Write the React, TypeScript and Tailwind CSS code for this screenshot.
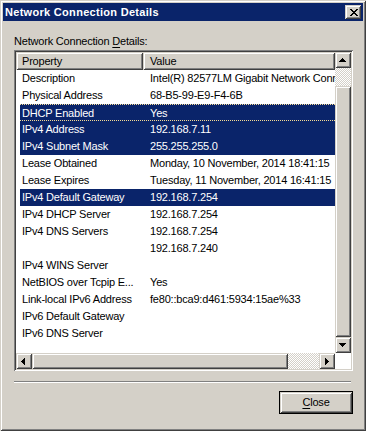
import React from "react";

const raised =
  "shadow-[inset_1px_1px_#d4d0c8,inset_-1px_-1px_#404040,inset_2px_2px_#ffffff,inset_-2px_-2px_#808080]";
const sunken =
  "shadow-[inset_1px_1px_#808080,inset_-1px_-1px_#ffffff,inset_2px_2px_#404040,inset_-2px_-2px_#d4d0c8]";
const checker =
  "bg-[repeating-conic-gradient(#ffffff_0%_25%,#d4d0c8_0%_50%)] bg-[length:2px_2px]";

type Row = { p: string; v: string; sel?: boolean; focus?: boolean };

const rows: Row[] = [
  { p: "Description", v: "Intel(R) 82577LM Gigabit Network Connection" },
  { p: "Physical Address", v: "68-B5-99-E9-F4-6B" },
  { p: "DHCP Enabled", v: "Yes", sel: true, focus: true },
  { p: "IPv4 Address", v: "192.168.7.11", sel: true },
  { p: "IPv4 Subnet Mask", v: "255.255.255.0", sel: true },
  { p: "Lease Obtained", v: "Monday, 10 November, 2014 18:41:15" },
  { p: "Lease Expires", v: "Tuesday, 11 November, 2014 16:41:15" },
  { p: "IPv4 Default Gateway", v: "192.168.7.254", sel: true },
  { p: "IPv4 DHCP Server", v: "192.168.7.254" },
  { p: "IPv4 DNS Servers", v: "192.168.7.254" },
  { p: "", v: "192.168.7.240" },
  { p: "IPv4 WINS Server", v: "" },
  { p: "NetBIOS over Tcpip E...", v: "Yes" },
  { p: "Link-local IPv6 Address", v: "fe80::bca9:d461:5934:15ae%33" },
  { p: "IPv6 Default Gateway", v: "" },
  { p: "IPv6 DNS Server", v: "" },
];

function Arrow({ dir }: { dir: "up" | "down" | "left" | "right" }) {
  const rects: React.ReactNode[] = [];
  for (let i = 0; i < 4; i++) {
    const len = 7 - i * 2;
    if (dir === "up") rects.push(<rect key={i} x={4 + i} y={9 - i} width={len} height={1} />);
    if (dir === "down") rects.push(<rect key={i} x={4 + i} y={6 + i} width={len} height={1} />);
    if (dir === "left") rects.push(<rect key={i} x={5 + 3 - i} y={5 + i - 0} width={1} height={0} />);
  }
  if (dir === "left") {
    rects.length = 0;
    for (let i = 0; i < 4; i++) {
      rects.push(<rect key={i} x={5 + i} y={8 - i} width={1} height={1 + i * 2} />);
    }
  }
  if (dir === "right") {
    rects.length = 0;
    for (let i = 0; i < 4; i++) {
      rects.push(<rect key={i} x={9 - i} y={8 - i} width={1} height={1 + i * 2} />);
    }
  }
  return (
    <svg width="16" height="16" viewBox="0 0 16 16" shapeRendering="crispEdges" className="block">
      <g fill="#000">{rects}</g>
    </svg>
  );
}

function ScrollBtn({ dir }: { dir: "up" | "down" | "left" | "right" }) {
  return (
    <div className={`w-[16px] h-[16px] shrink-0 bg-[#d4d0c8] ${raised}`}>
      <Arrow dir={dir} />
    </div>
  );
}

function CloseGlyph() {
  const pts = [
    [0, 0], [1, 0], [6, 0], [7, 0],
    [1, 1], [2, 1], [5, 1], [6, 1],
    [2, 2], [3, 2], [4, 2], [5, 2],
    [3, 3], [4, 3],
    [2, 4], [3, 4], [4, 4], [5, 4],
    [1, 5], [2, 5], [5, 5], [6, 5],
    [0, 6], [1, 6], [6, 6], [7, 6],
  ];
  return (
    <svg width="8" height="7" viewBox="0 0 8 7" shapeRendering="crispEdges" className="block">
      <g fill="#000">
        {pts.map(([x, y], i) => (
          <rect key={i} x={x} y={y} width={1} height={1} />
        ))}
      </g>
    </svg>
  );
}

export default function App() {
  return (
    <div
      className={`w-[366px] h-[431px] bg-[#d4d0c8] p-[3px] flex flex-col text-[11px] text-black ${raised}`}
      style={{ fontFamily: '"Liberation Sans", Arial, sans-serif' }}
    >
      {/* Title bar */}
      <div className="h-[18px] bg-[#0a246a] flex items-center justify-between pl-[2px] pr-[2px] shrink-0">
        <span className="text-white font-bold text-[11px] leading-[18px] tracking-[0.3px]">
          Network Connection Details
        </span>
        <div className={`w-[16px] h-[14px] bg-[#d4d0c8] flex items-center justify-center ${raised}`}>
          <div className="pl-[1px] pt-[1px]">
            <CloseGlyph />
          </div>
        </div>
      </div>

      {/* Body */}
      <div className="flex flex-col pl-[11px] pr-[10px]">
        <div className="mt-[14px] leading-[13px] tracking-[-0.2px] h-[13px]">
          Network Connection <span className="underline underline-offset-[2px]">D</span>etails:
        </div>

        {/* List view */}
        <div className={`mt-[2px] w-[339px] h-[321px] bg-white p-[2px] ${sunken}`}>
          <div className="grid grid-cols-[319px_16px] grid-rows-[301px_16px]">
            {/* content */}
            <div className="overflow-hidden flex flex-col">
              <div className="flex h-[18px] shrink-0">
                <div className={`w-[127px] h-[18px] bg-[#d4d0c8] pl-[6px] leading-[18px] tracking-[-0.2px] ${raised}`}>
                  Property
                </div>
                <div className={`flex-1 h-[18px] bg-[#d4d0c8] pl-[7px] leading-[18px] tracking-[-0.2px] ${raised}`}>
                  Value
                </div>
              </div>
              {rows.map((r, i) => (
                <div key={i} className="flex h-[17px] shrink-0 pl-[4px]">
                  <div
                    className={`flex w-full h-[17px] whitespace-nowrap tracking-[-0.2px] leading-[17px] ${
                      r.sel ? "bg-[#0a246a] text-white" : ""
                    } ${r.focus ? "border-y border-dotted border-[#f5db95] leading-[15px]" : ""}`}
                  >
                    <div className="w-[123px] shrink-0 pl-[2px] overflow-hidden">{r.p}</div>
                    <div className="pl-[7px] whitespace-nowrap">{r.v}</div>
                  </div>
                </div>
              ))}
            </div>
            {/* vertical scrollbar */}
            <div className="flex flex-col">
              <ScrollBtn dir="up" />
              <div className={`h-[18px] ${checker}`} />
              <div className={`flex-1 bg-[#d4d0c8] ${raised}`} />
              <ScrollBtn dir="down" />
            </div>
            {/* horizontal scrollbar */}
            <div className="flex">
              <ScrollBtn dir="left" />
              <div className={`w-[256px] bg-[#d4d0c8] ${raised}`} />
              <div className={`flex-1 ${checker}`} />
              <ScrollBtn dir="right" />
            </div>
            <div className="bg-white" />
          </div>
        </div>

        {/* separator */}
        <div className="mt-[10px] h-[2px] w-[337px] border-t border-[#808080] border-b border-b-white" />

        {/* button row */}
        <div className="flex justify-end mt-[8px] pr-[0px]">
          <div className="w-[74px] h-[23px] border border-black">
            <div className={`w-full h-full bg-[#d4d0c8] flex items-center justify-center leading-[13px] tracking-[-0.2px] ${raised}`}>
              <span>
                <span className="underline underline-offset-[2px]">C</span>lose
              </span>
            </div>
          </div>
        </div>
      </div>
    </div>
  );
}
